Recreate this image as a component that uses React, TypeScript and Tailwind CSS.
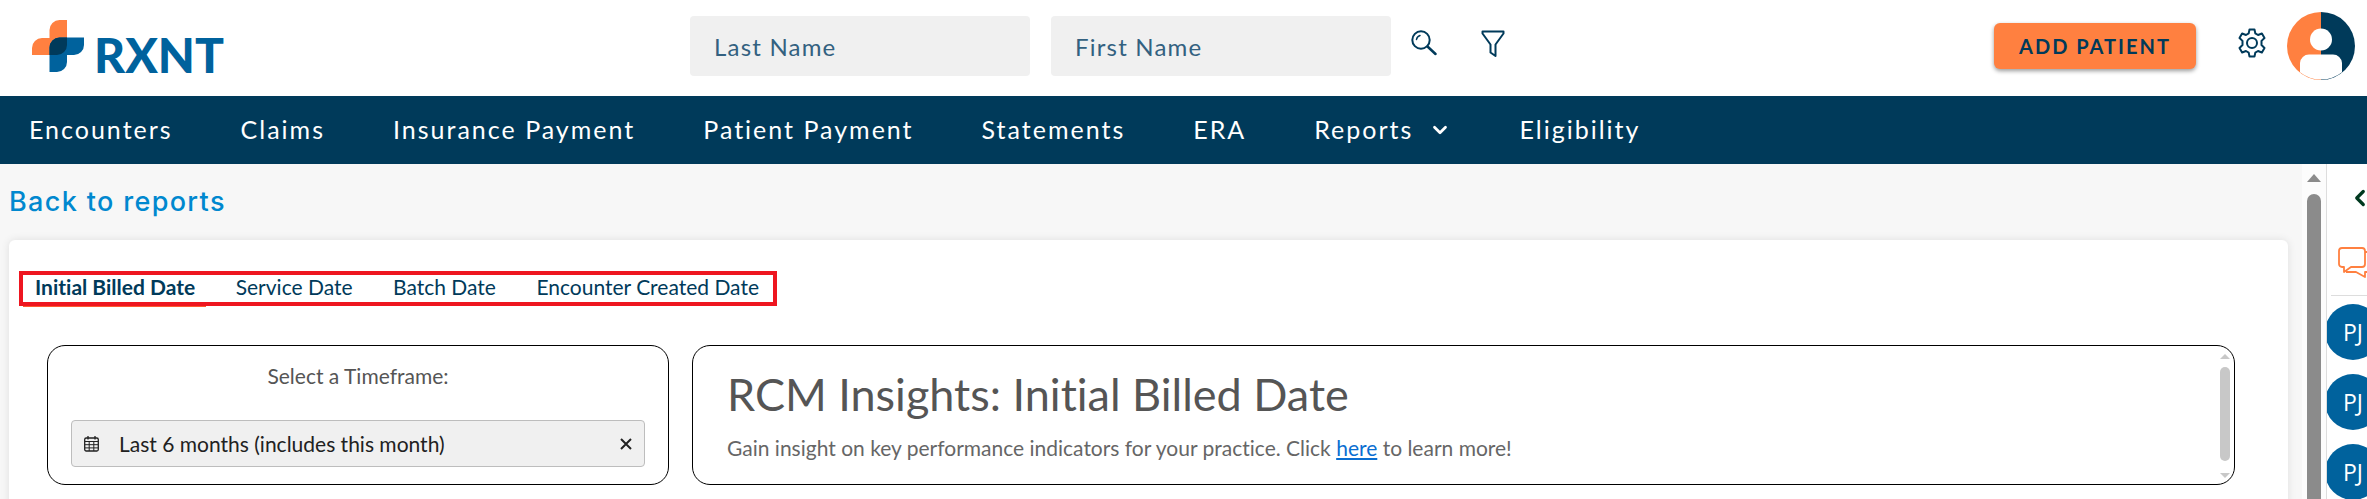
import { useState } from 'react'
import { ChevronDown, ChevronLeft } from 'lucide-react'

const navItems = [
  { label: 'Encounters' },
  { label: 'Claims' },
  { label: 'Insurance Payment' },
  { label: 'Patient Payment' },
  { label: 'Statements' },
  { label: 'ERA' },
  { label: 'Reports', menu: true },
  { label: 'Eligibility' },
]

const tabs = ['Initial Billed Date', 'Service Date', 'Batch Date', 'Encounter Created Date']

const contacts = ['PJ', 'PJ', 'PJ']

function Logo() {
  return (
    <a href="#home" aria-label="RXNT home" className="flex w-[658px] shrink-0 items-end gap-2.5">
      <svg viewBox="0 0 52 52" className="size-[52px]" aria-hidden="true">
        <path d="M17.5 18V10A10 10 0 0 1 27.5 0H35V35H0V28A10 10 0 0 1 10 18Z" fill="#ff8040" />
        <path d="M27.5 17.5H52V25A10 10 0 0 1 42 35H35V42A10 10 0 0 1 25 52H17.5V27.5A10 10 0 0 1 27.5 17.5Z" fill="#00629d" />
        <path d="M27.5 17.5H35V25A10 10 0 0 1 25 35H17.5V27.5A10 10 0 0 1 27.5 17.5Z" fill="#003a5a" />
      </svg>
      <span className="h-[43px] text-[48px] leading-[52px] font-black text-[#00629d]">RXNT</span>
    </a>
  )
}

function SearchIcon() {
  return (
    <svg viewBox="0 0 26 26" className="size-[26px]" fill="none" stroke="#003a5a" strokeLinecap="round" aria-hidden="true">
      <circle cx="10" cy="10" r="8.7" strokeWidth="2" />
      <path d="M5.5 9.5A5 5 0 0 1 9 5.5" strokeWidth="1.5" />
      <path d="M16.5 16.5L24.5 24" strokeWidth="2.5" />
    </svg>
  )
}

function FilterIcon() {
  return (
    <svg viewBox="0 0 24 28" className="h-7 w-6" fill="none" stroke="#003a5a" strokeWidth="2" strokeLinejoin="round" aria-hidden="true">
      <path d="M1.5 1.5H22.5V3.5L14.5 14.5V26L9.5 22.5V14.5L1.5 3.5Z" />
    </svg>
  )
}

function GearIcon() {
  return (
    <svg viewBox="0 0 28 30" className="h-[30px] w-7" fill="none" stroke="#003a5a" strokeWidth="2" strokeLinejoin="round" aria-hidden="true">
      <path d="M11.5 1.5H16.5L17.3 5.4L20 7L23.9 5.5L26.5 10L23.5 12.9V17L26.5 20L23.9 24.5L20 23L17.3 24.6L16.5 28.5H11.5L10.7 24.6L8 23L4.1 24.5L1.5 20L4.5 17V12.9L1.5 10L4.1 5.5L8 7L10.7 5.4Z" />
      <circle cx="14" cy="15" r="5" />
    </svg>
  )
}

function AvatarIcon() {
  return (
    <svg viewBox="0 0 68 68" className="size-[68px]" aria-hidden="true">
      <path d="M34 0A34 34 0 0 0 34 68Z" fill="#ff8040" />
      <path d="M34 0A34 34 0 0 1 34 68Z" fill="#003a5a" />
      <circle cx="34" cy="27.5" r="11" fill="#fff" />
      <path d="M13 60.2V51A9 9 0 0 1 22 42.5H46A9 9 0 0 1 55 51V60.2A33.5 33.5 0 0 1 13 60.2Z" fill="#fff" />
    </svg>
  )
}

function ChatIcon() {
  return (
    <svg viewBox="0 0 44 32" className="h-8 w-11 shrink-0" fill="none" stroke="#ff8040" strokeWidth="1.8" strokeLinejoin="round" aria-hidden="true">
      <path d="M4 1H24A3 3 0 0 1 27 4V17A3 3 0 0 1 24 20H13L6 25V20H4A3 3 0 0 1 1 17V4A3 3 0 0 1 4 1Z" />
      <path d="M27 5H39A3 3 0 0 1 42 8V22A3 3 0 0 1 39 25H27V30L18 25H8" />
    </svg>
  )
}

function CalendarIcon() {
  return (
    <svg viewBox="0 0 15 16" className="h-4 w-[15px] shrink-0" fill="none" stroke="#212121" aria-hidden="true">
      <rect x="0.7" y="2" width="13.6" height="13" rx="1.5" strokeWidth="1.3" />
      <path d="M1 5.5H14M1 8.7H14M1 11.9H14M5.2 5.5V15M9.8 5.5V15" />
      <path d="M4 0V3.5M11 0V3.5" strokeWidth="1.3" />
    </svg>
  )
}

function ClearIcon() {
  return (
    <svg viewBox="0 0 12 12" className="size-3" stroke="#212121" strokeWidth="2" aria-hidden="true">
      <path d="M1 1L11 11M11 1L1 11" />
    </svg>
  )
}

function Header() {
  return (
    <header className="flex h-24 shrink-0 items-start bg-white pr-3 pl-8">
      <div className="pt-5">
        <Logo />
      </div>
      <form className="flex items-start pt-4" onSubmit={(e) => e.preventDefault()}>
        <input
          aria-label="Last Name"
          placeholder="Last Name"
          className="mr-[21px] h-[60px] w-[340px] rounded bg-[#f0f0f0] px-6 text-2xl tracking-wider text-[#003a5a] placeholder:text-[#336180]"
        />
        <input
          aria-label="First Name"
          placeholder="First Name"
          className="h-[60px] w-[340px] rounded bg-[#f0f0f0] px-6 text-2xl tracking-wider text-[#003a5a] placeholder:text-[#336180]"
        />
        <button type="submit" aria-label="Search" className="mt-3.5 ml-5">
          <SearchIcon />
        </button>
        <button type="button" aria-label="Filter" className="mt-3.5 ml-11">
          <FilterIcon />
        </button>
      </form>
      <div className="ml-auto flex items-start">
        <button className="mt-[23px] h-[46px] w-[202px] rounded-md bg-[#ff8040] text-xl font-bold tracking-widest text-[#003a5a] shadow-[0_2px_4px_rgba(0,0,0,0.4)]">
          ADD PATIENT
        </button>
        <button aria-label="Settings" className="mt-7 ml-[42px]">
          <GearIcon />
        </button>
        <button aria-label="Account" className="mt-3 ml-[21px]">
          <AvatarIcon />
        </button>
      </div>
    </header>
  )
}

function Nav() {
  return (
    <nav className="flex h-[68px] shrink-0 items-center gap-[68px] bg-[#003a5a] px-[29px] text-[25px] tracking-[2px] text-white">
      {navItems.map((item) => (
        <a key={item.label} href="#" className="flex items-center gap-4 whitespace-nowrap">
          {item.label}
          {item.menu && <ChevronDown size={22} strokeWidth={3} />}
        </a>
      ))}
    </nav>
  )
}

function Timeframe() {
  const [value, setValue] = useState('Last 6 months (includes this month)')
  return (
    <section className="flex h-[140px] w-[622px] shrink-0 flex-col rounded-[18px] border border-black px-[23px] pt-4">
      <label htmlFor="timeframe" className="text-center text-[21px] leading-7 text-[#555]">
        Select a Timeframe:
      </label>
      <div className="mt-[30px] flex h-[47px] items-center rounded border border-[#bdbdbd] bg-[#f0f0f0] px-3">
        <CalendarIcon />
        <input
          id="timeframe"
          value={value}
          onChange={(e) => setValue(e.target.value)}
          className="ml-5 min-w-0 flex-1 text-[21px] text-[#212121]"
        />
        <button aria-label="Clear timeframe" onClick={() => setValue('')}>
          <ClearIcon />
        </button>
      </div>
    </section>
  )
}

function Insights() {
  return (
    <section className="flex h-[140px] min-w-0 flex-1 justify-between rounded-[18px] border border-black pr-1 pl-[34px]">
      <div>
        <h1 className="mt-5 text-[45px] leading-[56px] text-[#555]">RCM Insights: Initial Billed Date</h1>
        <p className="mt-3 text-[21px] leading-7 text-[#666]">
          Gain insight on key performance indicators for your practice. Click{' '}
          <a href="#learn" className="text-[#0a6ed1] underline decoration-2 underline-offset-2">here</a> to learn more!
        </p>
      </div>
      <div className="flex flex-col items-center pt-2 pb-1.5" aria-hidden="true">
        <svg viewBox="0 0 10 5" className="h-[5px] w-2.5" fill="#c8c8c8"><path d="M0 5L5 0L10 5Z" /></svg>
        <div className="mt-2 mb-3 w-2.5 flex-1 rounded-full bg-[#c8c8c8]" />
        <svg viewBox="0 0 10 5" className="h-[5px] w-2.5" fill="#c8c8c8"><path d="M0 0H10L5 5Z" /></svg>
      </div>
    </section>
  )
}

function Tabs() {
  const [active, setActive] = useState(tabs[0])
  return (
    <div role="tablist" className="flex h-[35px] w-[758px] items-center justify-between border-4 border-[#ee1620] pr-3.5 pb-1 pl-3 text-[21px] leading-6 text-[#003a5a]">
      {tabs.map((tab) => (
        <button
          key={tab}
          role="tab"
          aria-selected={tab === active}
          onClick={() => setActive(tab)}
          className={tab === active ? 'font-bold' : ''}
        >
          {tab}
        </button>
      ))}
    </div>
  )
}

function SidePanel() {
  return (
    <aside className="flex w-[41px] shrink-0 flex-col overflow-hidden border-l border-[#ddd] bg-white">
      <button aria-label="Expand panel" className="mt-[21px] ml-5 w-6">
        <ChevronLeft size={26} strokeWidth={3} color="#00391f" />
      </button>
      <button aria-label="Messages" className="mt-9 ml-[11px] w-11">
        <ChatIcon />
      </button>
      <hr className="mt-4 ml-1 border-[#ddd]" />
      <ul className="mt-2 flex flex-col gap-3.5">
        {contacts.map((name, i) => (
          <li key={i} className="-ml-0.5 flex size-14 items-center justify-center rounded-full bg-[#00629d] font-['Open_Sans'] text-[23px] text-white">
            {name}
          </li>
        ))}
      </ul>
    </aside>
  )
}

export default function App() {
  return (
    <div className="flex h-screen flex-col overflow-hidden bg-[#f7f7f7] font-['Lato','Open_Sans',sans-serif] [font-variant-ligatures:none]">
      <Header />
      <Nav />
      <div className="flex min-h-0 flex-1">
        <main className="min-w-0 flex-1 overflow-hidden pr-3.5 pl-[9px]">
          <a href="#reports" className="mt-[18px] block w-fit font-['Inter'] text-[27px] leading-10 font-medium tracking-wider text-[#0088cf]">
            Back to reports
          </a>
          <div className="mt-[18px] min-h-[280px] rounded-md bg-white pt-[31px] pr-[53px] pl-2.5 shadow-[0_0_8px_rgba(0,0,0,0.1)]">
            <Tabs />
            <div className="ml-1 h-px w-[183px] bg-[#ff5a30]" />
            <div className="mt-[38px] ml-7 flex gap-[23px]">
              <Timeframe />
              <Insights />
            </div>
          </div>
        </main>
        <div className="flex w-6 shrink-0 flex-col items-center bg-[#fcfcfc] pt-2.5" aria-hidden="true">
          <svg viewBox="0 0 14 8" className="h-2 w-3.5" fill="#8b8b8b"><path d="M0 8L7 0L14 8Z" /></svg>
          <div className="mt-3 w-3.5 flex-1 rounded-t-full bg-[#8b8b8b]" />
        </div>
        <SidePanel />
      </div>
    </div>
  )
}
